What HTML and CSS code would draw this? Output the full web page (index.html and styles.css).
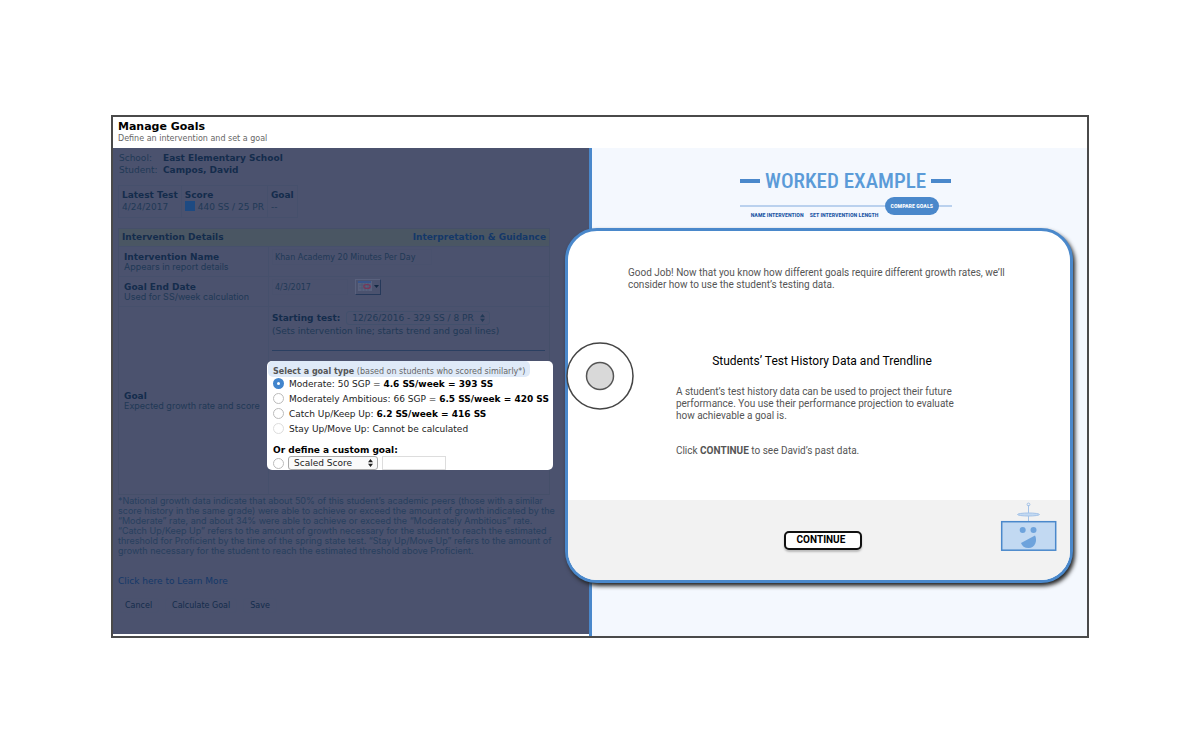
FILE: index.html
```html
<!DOCTYPE html>
<html lang="en">
<head>
<meta charset="utf-8">
<title>Manage Goals</title>
<link rel="stylesheet" href="styles.css">
</head>
<body>
<main class="frame">
  <header class="page-header">
    <h1 class="page-title">Manage Goals</h1>
    <p class="page-subtitle">Define an intervention and set a goal</p>
  </header>
  <div class="workspace">
    <section class="goal-panel">
      <dl class="facts">
        <dt>School:</dt><dd>East Elementary School</dd>
        <dt>Student:</dt><dd>Campos, David</dd>
      </dl>
      <table class="scores">
        <tr><th>Latest Test</th><th>Score</th><th>Goal</th></tr>
        <tr><td>4/24/2017</td><td><span class="swatch"></span>440 SS / 25 PR</td><td>--</td></tr>
      </table>
      <div class="details">
        <div class="details-head"><h2>Intervention Details</h2><a href="#guidance">Interpretation &amp; Guidance</a></div>
        <div class="row">
          <div class="label"><label for="name">Intervention Name</label><span>Appears in report details</span></div>
          <div class="value"><input class="name-input" id="name" type="text" value="Khan Academy 20 Minutes Per Day"></div>
        </div>
        <div class="row">
          <div class="label"><label for="end">Goal End Date</label><span>Used for SS/week calculation</span></div>
          <div class="value date-value"><input class="date-input" id="end" type="text" value="4/3/2017">
            <button class="calendar" type="button" aria-label="Choose date"><svg width="24" height="14" viewBox="0 0 24 14"><rect x="2" y="1" width="14" height="10" fill="#59617d"/><path d="M2 2h13" stroke="#2f5291" stroke-width="1.5"/><path d="M3 5h12M3 8h12M6 3v8M9 3v8M12 3v8" stroke="#485472" stroke-width=".6"/><ellipse cx="11" cy="6.500" rx="3.200" ry="2" fill="none" stroke="#7c3458" stroke-width="1.2"/><path d="M18 5h5l-2.500 3z" fill="#132844"/></svg></button>
          </div>
        </div>
        <div class="row">
          <div class="label"><b>Goal</b><span>Expected growth rate and score</span></div>
          <div class="value goal-value">
            <div class="starting"><label for="start">Starting test:</label>
              <span class="select-wrap"><select class="start-select" id="start"><option>12/26/2016 - 329 SS / 8 PR</option></select><svg class="arrows" width="5" height="8" viewBox="0 0 5 8"><path d="M0 3.200L2.500 0L5 3.200zM0 4.800L2.500 8L5 4.800z" fill="currentColor"/></svg></span>
            </div>
            <p class="hint">(Sets intervention line; starts trend and goal lines)</p>
            <hr class="rule">
            <fieldset class="goal-card">
              <legend class="goal-legend"><b>Select a goal type</b> (based on students who scored similarly*)</legend>
              <label class="option"><input type="radio" name="goal" checked><span>Moderate: 50 SGP = <b>4.6 SS/week = 393 SS</b></span></label>
              <label class="option"><input type="radio" name="goal"><span>Moderately Ambitious: 66 SGP = <b>6.5 SS/week = 420 SS</b></span></label>
              <label class="option"><input type="radio" name="goal"><span>Catch Up/Keep Up: <b>6.2 SS/week = 416 SS</b></span></label>
              <label class="option"><input type="radio" name="goal" disabled><span>Stay Up/Move Up: Cannot be calculated</span></label>
              <b class="custom-title">Or define a custom goal:</b>
              <div class="custom"><input type="radio" name="goal" aria-label="Custom goal">
                <span class="select-wrap"><select class="score-select" aria-label="Custom goal type"><option>Scaled Score</option></select><svg class="arrows" width="5" height="8" viewBox="0 0 5 8"><path d="M0 3.200L2.500 0L5 3.200zM0 4.800L2.500 8L5 4.800z" fill="currentColor"/></svg></span>
                <input class="custom-input" type="text" aria-label="Custom goal value"></div>
            </fieldset>
          </div>
        </div>
      </div>
      <p class="notes">*National growth data indicate that about 50% of this student’s academic peers (those with a similar<br>score history in the same grade) were able to achieve or exceed the amount of growth indicated by the<br>“Moderate” rate, and about 34% were able to achieve or exceed the “Moderately Ambitious” rate.<br>“Catch Up/Keep Up” refers to the amount of growth necessary for the student to reach the estimated<br>threshold for Proficient by the time of the spring state test. “Stay Up/Move Up” refers to the amount of<br>growth necessary for the student to reach the estimated threshold above Proficient.</p>
      <a class="learn" href="#learn">Click here to Learn More</a>
      <div class="actions"><button type="button">Cancel</button><button type="button">Calculate Goal</button><button type="button">Save</button></div>
    </section>
    <section class="lesson-panel">
      <h2 class="lesson-title"><span>WORKED EXAMPLE</span></h2>
      <ol class="steps">
        <li>NAME INTERVENTION</li><li>SET INTERVENTION LENGTH</li><li class="current">COMPARE GOALS</li>
      </ol>
    </section>
    <div class="dialog" role="dialog" aria-label="Worked example">
      <div class="dialog-body">
        <p class="praise">Good Job! Now that you know how different goals require different growth rates, we’ll consider how to use the student’s testing data.</p>
        <h3 class="topic">Students’ Test History Data and Trendline</h3>
        <div class="explain">
          <p>A student’s test history data can be used to project their future performance. You use their performance projection to evaluate how achievable a goal is.</p>
          <p>Click <b>CONTINUE</b> to see David’s past data.</p>
        </div>
        <svg class="target" width="68" height="68" viewBox="0 0 68 68"><circle cx="34" cy="34" r="33" fill="#fff" stroke="#444" stroke-width="1.500"/><circle cx="34" cy="34" r="13.500" fill="#d9d9d9" stroke="#555" stroke-width="1.500"/></svg>
      </div>
      <footer class="dialog-footer">
        <button class="continue" type="button">CONTINUE</button>
        <svg class="robot" width="58" height="50" viewBox="0 0 58 50"><g fill="none" stroke="#a3c2e8" stroke-width="1"><path d="M28.500 3v16"/><circle cx="28.500" cy="2.500" r="1.400"/><ellipse cx="28.500" cy="12.500" rx="11" ry="1.500" fill="#c2d9f2"/></g><rect x="1.700" y="19.700" width="54" height="28.500" fill="#c2d9f2" stroke="#4a88cb" stroke-width="1.500"/><g fill="#6ea3dc"><circle cx="22.700" cy="28" r="3"/><circle cx="33.500" cy="28" r="3"/><path d="M21 41L35 33.500C37.500 38 35.500 46 28.500 46C24.500 46 22 44 21 41z"/></g></svg>
      </footer>
    </div>
  </div>
</main>
</body>
</html>
```
FILE: styles.css
```css
* { box-sizing: border-box; }
body { margin: 0; padding: 115px 111px; background: #fff; font: 9px/10px "DejaVu Sans", sans-serif; }
h1, h2, h3, p, dl, dd, ol { margin: 0; padding: 0; }
input, select, button { font: inherit; color: inherit; }
a { text-decoration: none; }

.frame { border: 2px solid #4a4a4a; background: #fff; }
.page-header { height: 31px; padding: 3px 5px; }
.page-title { font-size: 11px; line-height: 13px; }
.page-subtitle { font-size: 8px; line-height: 11px; color: #666; }
.workspace { position: relative; display: flex; min-height: 488px; }

.goal-panel { width: 48.9%; margin-bottom: 2px; padding: 4px 0 0 5px; background: #4b526e; color: #213956; white-space: nowrap; overflow: hidden; }
.goal-panel b, .goal-panel th, .goal-panel dd, .goal-panel h2 { color: #142c4c; }
.facts { display: grid; grid-template-columns: 44px 1fr; padding-left: 1px; line-height: 12px; }
.facts dd { font-weight: bold; }
.scores { margin-top: 9px; border-collapse: collapse; line-height: 12px; }
.scores th, .scores td { padding: 0 3px; text-align: left; border: solid #46506c; border-width: 0 1px; }
.scores tr:first-child th { border-top-width: 1px; padding-top: 3px; }
.scores tr:last-child td { border-bottom-width: 1px; padding-bottom: 4px; }
.swatch { display: inline-block; width: 10px; height: 10px; margin-right: 3px; background: #1d4a82; vertical-align: -1px; }

.details { width: 432px; margin-top: 10px; border: 1px solid #454f69; }
.details-head { display: flex; justify-content: space-between; padding: 2px 3px; line-height: 13px; background: #4a5663; }
.details-head h2 { font-size: 9px; }
.details-head a { font-weight: bold; color: #143869; }
.row { display: grid; grid-template-columns: 149px 1fr; border-top: 1px solid #46506c; min-height: 30px; }
.label { display: flex; flex-direction: column; justify-content: center; padding-left: 5px; }
.label label, .label b { font-weight: bold; color: #142c4c; }
.label span { font-family: Inter, "DejaVu Sans", sans-serif; }
.value { padding-left: 3px; border-left: 1px solid #46506c; }
.name-input, .date-input { height: 16px; padding: 0 2px; border: 1px solid #49516d; background: transparent; font-size: 8px; }
.name-input { width: 160px; margin-top: 2px; }
.date-input { width: 76px; }
.date-value { display: flex; align-items: flex-start; gap: 7px; padding-top: 2px; }
.calendar { display: flex; padding: 0; border: 1px solid #59617d; border-right-color: #26395a; border-bottom-color: #26395a; background: transparent; }
.starting { display: flex; align-items: center; gap: 6px; padding-top: 4px; }
.starting label { font-weight: bold; color: #142c4c; }
.select-wrap { display: flex; align-items: center; }
.select-wrap select { appearance: none; height: 14px; padding: 0 10px 0 5px; border: 1px solid #42506c; border-radius: 3px; background: transparent; }
.arrows { margin: 0 5px 0 -10px; pointer-events: none; }
.start-select { width: 144px; }
.hint { margin-top: 1px; }
.rule { margin: 14px 4px 0 0; border: 0; border-top: 1px solid #2a3f61; }
.goal-card { min-width: 0; height: 109px; margin: 10px -4px 24px -5px; padding: 0 0 0 6px; border: 0; border-radius: 5px; background: #fff; color: #222; overflow: hidden; }
.goal-panel .goal-card b { color: #000; }
.goal-panel .goal-card .goal-legend b { color: #555; }
.goal-legend { float: left; height: 16px; margin: 0 0 -1px -5px; padding: 5px 5px 0; border-radius: 5px; background: #dfeaf8; color: #666; font-size: 8px; line-height: 12px; }
.option { clear: both; display: flex; align-items: center; gap: 5px; height: 15px; }
.goal-card input[type=radio] { appearance: none; flex: none; width: 11px; height: 11px; margin: 0; border: 1px solid #bbb; border-radius: 50%; background: #fff; }
.goal-card input[type=radio]:checked { border: 4px solid #4285cd; }
.goal-card input[type=radio]:disabled { border-color: #ddd; }
.custom-title { display: block; margin-top: 9px; line-height: 11px; }
.custom { display: flex; align-items: center; gap: 4px; height: 14px; }
.score-select { width: 90px; }
.goal-card .score-select { border-color: #aaa; background: #fafafa; color: #222; }
.custom-input { width: 64px; height: 14px; border: 1px solid #ddd; }
.notes { margin-top: 1px; font-family: Inter, "DejaVu Sans", sans-serif; color: #28405e; }
.learn { display: block; margin-top: 20px; color: #143869; }
.actions { display: flex; gap: 6px; margin-top: 12px; }
.actions button { padding: 1px 6px; border: 1px solid #4a526e; border-radius: 3px; background: transparent; color: #142c4c; font-size: 8px; line-height: 11px; }

.lesson-panel { flex: 1; padding: 19px 0 0 12px; border-left: 3px solid #4a88cb; background: #f4f8fe; }
.lesson-title { display: flex; justify-content: center; align-items: center; gap: 5px; font: 500 21px/28px "Roboto Condensed", Roboto, sans-serif; color: #5b9bd8; }
.lesson-title::before, .lesson-title::after { content: ""; width: 20px; height: 4px; background: #4a88cb; }
.steps { position: relative; display: flex; align-items: flex-start; gap: 6px; width: 212px; margin: 2px auto 0; padding-left: 11px; list-style: none; font: bold 6px/8px "Roboto Condensed", "Liberation Sans Narrow", Roboto, sans-serif; color: #1a56a5; white-space: nowrap; }
.steps::before { content: ""; position: absolute; left: 0; right: 0; top: 8px; height: 2px; background: #bad1ee; }
.steps li { padding-top: 14px; }
.steps .current { position: relative; padding: 5px 6px; border-radius: 9px; background: #4a88cb; color: #fff; }

.dialog { position: absolute; left: 46.4%; right: 14px; top: 80px; bottom: 53px; display: flex; flex-direction: column; border: 3px solid #4a88cb; border-radius: 32px; background: #fff; box-shadow: 2px 3px 4px #222; font: 10px/12px Roboto, sans-serif; color: #555; }
.dialog-body { position: relative; flex: 1; padding: 36px 50px 0 60px; }
.topic { margin: 63px 4px 0 0; text-align: center; font-size: 12px; line-height: 14px; font-weight: normal; color: #000; }
.explain { display: grid; gap: 23px; margin: 18px 60px 0 48px; }
.target { position: absolute; left: -2px; top: 111px; }
.dialog-footer { display: grid; grid-template-columns: 1fr auto 1fr; height: 80px; padding-left: 8px; border-radius: 0 0 29px 29px; background: #f2f2f2; }
.continue { grid-column: 2; align-self: center; width: 78px; height: 19px; padding: 0 4px 0 0; border: 2px solid #111; border-radius: 5px; background: #fff; box-shadow: 0 2px 2px #bbb; font-size: 10px; font-weight: bold; color: #000; }
.robot { justify-self: end; margin: 2px 12px 0 0; }
```
